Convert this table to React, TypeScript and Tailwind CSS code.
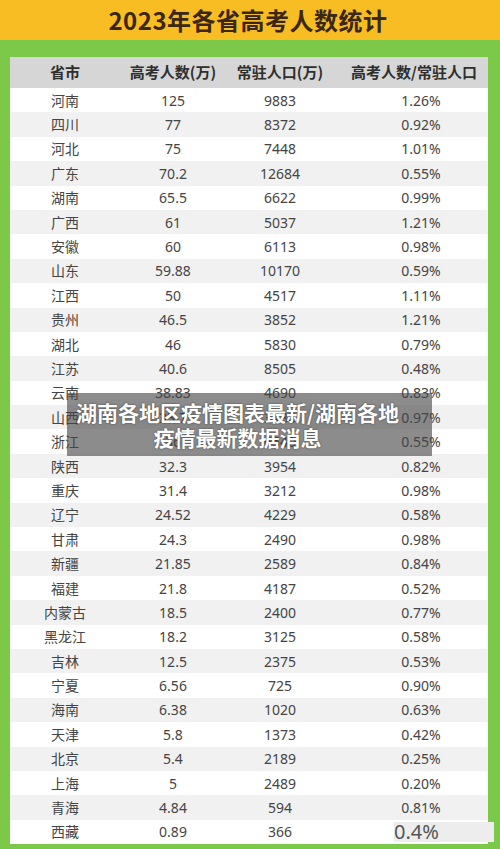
import React from 'react';

const rows: [string, string, string, string][] = [
  ['河南', '125', '9883', '1.26%'],
  ['四川', '77', '8372', '0.92%'],
  ['河北', '75', '7448', '1.01%'],
  ['广东', '70.2', '12684', '0.55%'],
  ['湖南', '65.5', '6622', '0.99%'],
  ['广西', '61', '5037', '1.21%'],
  ['安徽', '60', '6113', '0.98%'],
  ['山东', '59.88', '10170', '0.59%'],
  ['江西', '50', '4517', '1.11%'],
  ['贵州', '46.5', '3852', '1.21%'],
  ['湖北', '46', '5830', '0.79%'],
  ['江苏', '40.6', '8505', '0.48%'],
  ['云南', '38.83', '4690', '0.83%'],
  ['山西', '33.7', '3480', '0.97%'],
  ['浙江', '36', '6540', '0.55%'],
  ['陕西', '32.3', '3954', '0.82%'],
  ['重庆', '31.4', '3212', '0.98%'],
  ['辽宁', '24.52', '4229', '0.58%'],
  ['甘肃', '24.3', '2490', '0.98%'],
  ['新疆', '21.85', '2589', '0.84%'],
  ['福建', '21.8', '4187', '0.52%'],
  ['内蒙古', '18.5', '2400', '0.77%'],
  ['黑龙江', '18.2', '3125', '0.58%'],
  ['吉林', '12.5', '2375', '0.53%'],
  ['宁夏', '6.56', '725', '0.90%'],
  ['海南', '6.38', '1020', '0.63%'],
  ['天津', '5.8', '1373', '0.42%'],
  ['北京', '5.4', '2189', '0.25%'],
  ['上海', '5', '2489', '0.20%'],
  ['青海', '4.84', '594', '0.81%'],
  ['西藏', '0.89', '366', '0.4%'],
];

const cols = 'grid grid-cols-[110px_106px_108px_1fr] items-center text-center';

export default function App() {
  return (
    <div className="relative w-[500px] h-[849px] overflow-hidden bg-[#7cc94a] font-['Noto_Sans','Noto_Sans_CJK_SC',sans-serif]">
      <div className="h-[40px] bg-[#f8bd22] flex items-center justify-center">
        <h1 className="text-[24px] font-semibold text-[#3b2716] tracking-[0.5px] font-['Noto_Sans_CJK_SC',sans-serif] -ml-[4px]">
          2023年各省高考人数统计
        </h1>
      </div>
      <div className="mt-[17px] ml-[10px] w-[478px] bg-white">
        <div className={`${cols} h-[31px] bg-[#d6d6d6] text-[15px] font-bold text-[#2e2e2e] font-['Noto_Sans_CJK_SC',sans-serif]`}>
          <div>省市</div>
          <div>高考人数(万)</div>
          <div>常驻人口(万)</div>
          <div className="pl-[6px]">高考人数/常驻人口</div>
        </div>
        {rows.map((r, i) => {
          const last = r[0] === '西藏';
          return (
            <div
              key={r[0]}
              className={`${cols} h-[24.4px] text-[14px] text-[#444] ${i % 2 === 1 ? 'bg-[#f1f1f1]' : 'bg-white'}`}
            >
              <div className="font-['Noto_Sans_CJK_SC',sans-serif]">{r[0]}</div>
              <div>{r[1]}</div>
              <div>{r[2]}</div>
              {last ? (
                <div className="flex items-center h-full">
                  <span className="ml-[60px] w-[100px] h-[20px] bg-[#ededed] text-left text-[20px] leading-[20px] text-[#555]">
                    0.4%
                  </span>
                </div>
              ) : (
                <div className="pl-[20px]">{r[3]}</div>
              )}
            </div>
          );
        })}
      </div>
      <div className="absolute left-[67px] top-[393px] w-[365px] h-[63px] pr-[24px] bg-[rgba(70,70,70,0.62)] flex flex-col items-center justify-center">
        <p className="text-[21px] leading-[25px] font-bold text-white text-center font-['Noto_Sans_CJK_SC',sans-serif] [text-shadow:0_0_2px_rgba(0,0,0,0.6)]">
          湖南各地区疫情图表最新/湖南各地
          <br />
          疫情最新数据消息
        </p>
      </div>
    </div>
  );
}
